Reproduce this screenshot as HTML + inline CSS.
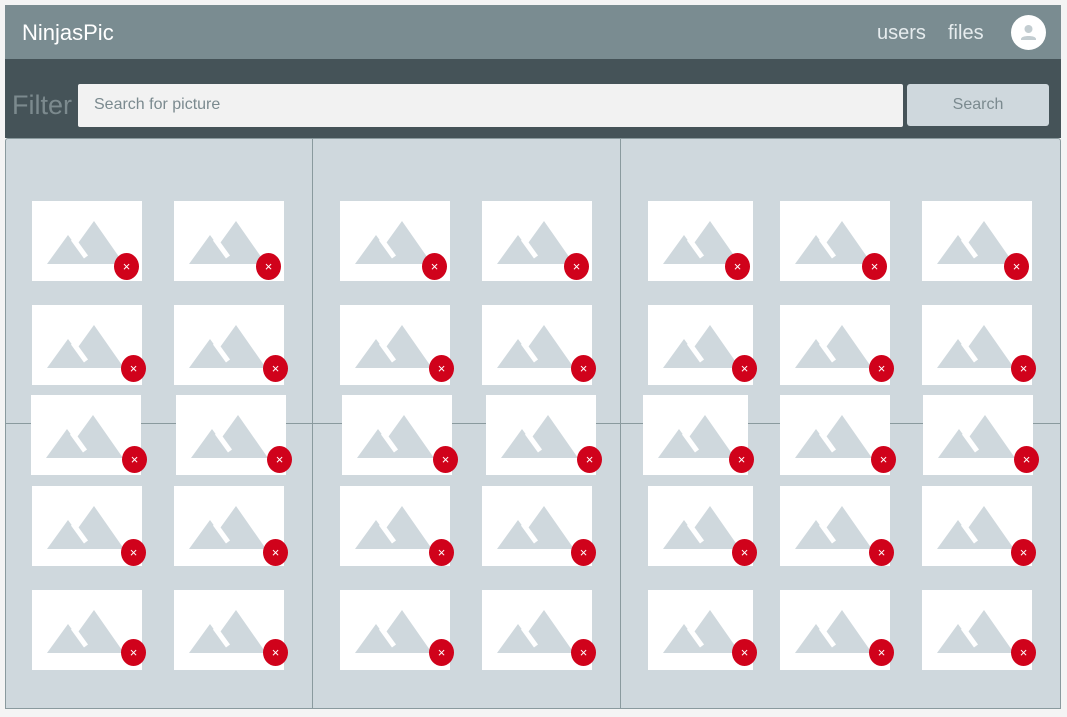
<!DOCTYPE html>
<html><head><meta charset="utf-8"><style>
*{box-sizing:border-box;margin:0;padding:0}
body{width:1067px;height:717px;background:#f4f4f4;font-family:"Liberation Sans",sans-serif;position:relative;overflow:hidden}
.hdr{position:absolute;left:5px;top:5px;width:1056px;height:54px;background:#7a8c91}
.logo{position:absolute;left:17px;top:15px;color:#fff;font-size:22px}
.nav{position:absolute;top:17px;color:#e6ecee;font-size:20px}
.av{position:absolute;left:1006px;top:10px;width:35px;height:35px;border-radius:50%;background:#fff}
.bar{position:absolute;left:5px;top:59px;width:1056px;height:79px;background:#455358}
.flt{position:absolute;left:7px;top:31px;color:#7c8a8e;font-size:27px}
.inp{position:absolute;left:73px;top:25px;width:825px;height:43px;background:#f2f2f2;border-radius:2px;color:#7b8a8f;font-size:16px;padding:12px 16px}
.btn{position:absolute;left:902px;top:25px;width:142px;height:42px;background:#cfd8dd;border-radius:3px;color:#7b8a8f;font-size:16px;text-align:center;line-height:42px}
.p{position:absolute;background:#cfd8dd;border:1px solid #8a9a9e}
.im{position:absolute;width:110px;height:80px;background:#fff}
.im svg{position:absolute;left:0;top:0}
.x{position:absolute;width:25px;height:27px;border-radius:50%;background:#d0021b;color:#fff;font-size:13px;text-align:center;line-height:27px}
</style></head><body>
<div class="hdr"><div class="logo">NinjasPic</div>
<div class="nav" style="left:872px">users</div><div class="nav" style="left:943px">files</div>
<div class="av"><svg width="35" height="35" viewBox="0 0 35 35"><circle cx="17.5" cy="14" r="4" fill="#c3cdd1"/><path d="M10 24c0-4 15-4 15 0v1H10z" fill="#c3cdd1"/></svg></div></div>
<div class="bar"><div class="flt">Filter</div><div class="inp">Search for picture</div><div class="btn">Search</div></div>
<div class="p" style="left:5px;top:138px;width:308px;height:286px;border-radius:3px 0 0 0"></div>
<div class="p" style="left:312px;top:138px;width:309px;height:286px"></div>
<div class="p" style="left:620px;top:138px;width:441px;height:286px;border-radius:0 3px 0 0"></div>
<div class="p" style="left:5px;top:423px;width:308px;height:286px"></div>
<div class="p" style="left:312px;top:423px;width:309px;height:286px"></div>
<div class="p" style="left:620px;top:423px;width:441px;height:286px"></div>
<div id="g"></div>
<script>
var rows=[[201,[32,174,340,482,648,780,922],-16,-15],[305,[32,174,340,482,648,780,922],-9,-17],[395,[31,176,342,486,643,780,923],-7,-16],[486,[32,174,340,482,648,780,922],-9,-14],[590,[32,174,340,482,648,780,922],-9,-18]];
var svg='<svg width="110" height="80" viewBox="0 0 110 80"><polygon points="15,63 36,34 44,45 62,20 92,63" fill="#cfd8dd"/><line x1="41" y1="38" x2="54" y2="56" stroke="#fff" stroke-width="5"/></svg>';
var h='';rows.forEach(function(r){r[1].forEach(function(x){var w=(x==648||x==643)?105:110;h+='<div class="im" style="left:'+x+'px;top:'+r[0]+'px;width:'+w+'px">'+svg+'</div><div class="x" style="left:'+(x+w+r[2]-12)+'px;top:'+(r[0]+80+r[3]-13)+'px">×</div>';});});
document.getElementById('g').innerHTML=h;
</script>
</body></html>
